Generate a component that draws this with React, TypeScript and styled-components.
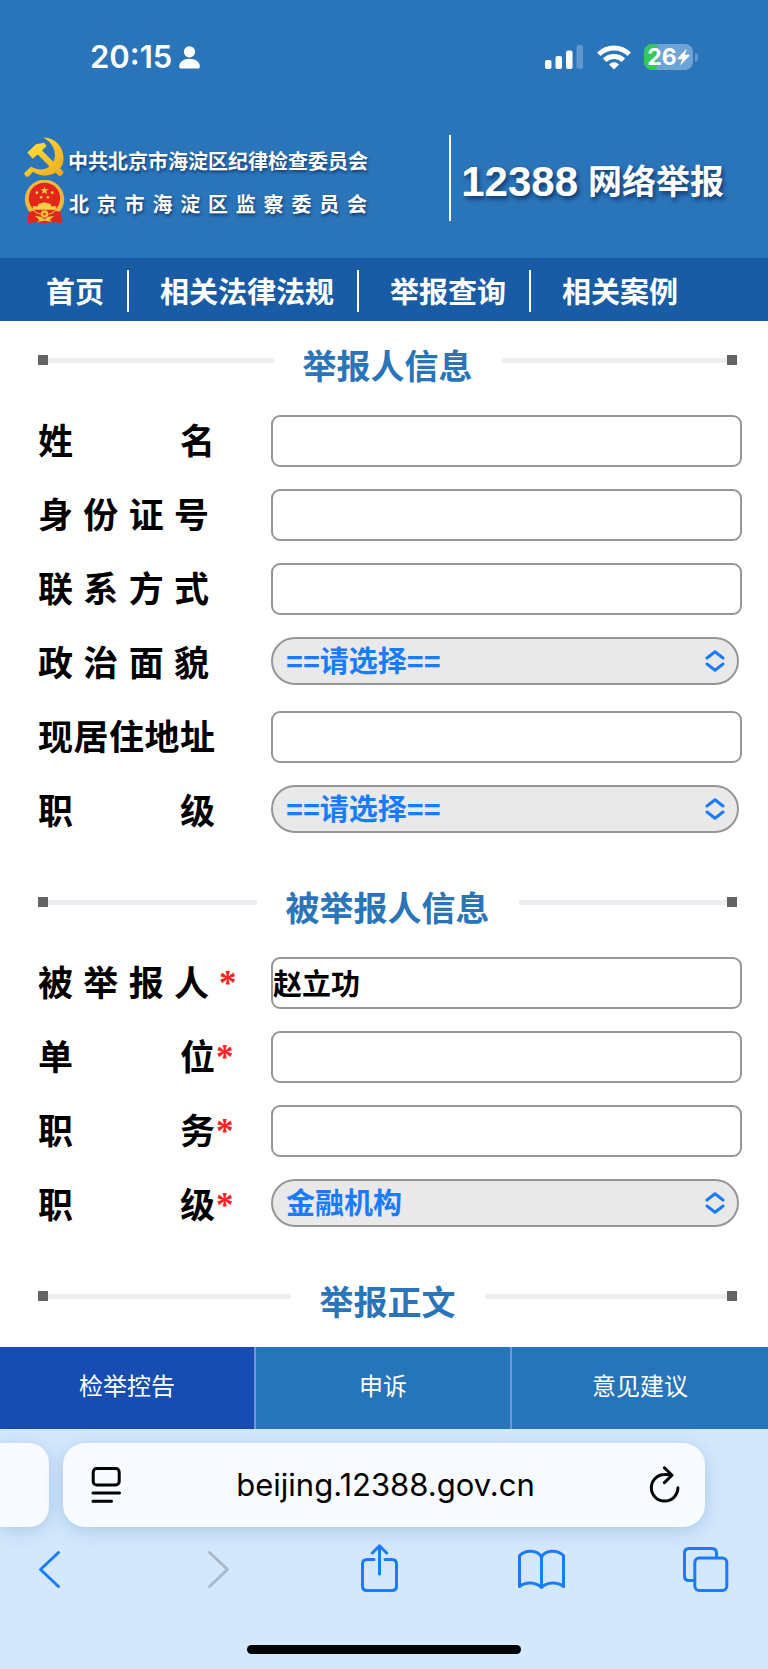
import React from "react";
import styled, { createGlobalStyle } from "styled-components";

const CJK = `"Noto Sans CJK SC"`;

const GlobalStyle = createGlobalStyle`
  *, *::before, *::after { box-sizing: border-box; }
  body {
    margin: 0;
    background: #fff;
    color: #000;
    font-family: "Liberation Sans", ${CJK}, sans-serif;
  }
  button, input, select { font: inherit; color: inherit; }
  a { color: inherit; text-decoration: none; }
`;

const Page = styled.div`
  width: 100%;
  overflow: hidden;
`;

/* ---------- header ---------- */

const Header = styled.header`
  background: #2a74b9;
  color: #fff;
`;

const StatusBar = styled.div`
  display: flex;
  align-items: center;
  justify-content: space-between;
  height: 114px;
  padding: 0 69px 0 90px;
  font-family: Inter, sans-serif;
`;

const StatusGroup = styled.div<{ $gap: number }>`
  display: flex;
  align-items: center;
  gap: ${(p) => p.$gap}px;
`;

const Clock = styled.time`
  font-size: 31px;
  font-weight: 600;
  line-height: 36px;
`;

const Battery = styled.div`
  position: relative;
  display: flex;
  align-items: center;
  justify-content: center;
  width: 49px;
  height: 26px;
  margin-right: 6px;
  border-radius: 8px;
  background: linear-gradient(90deg, #35c759 0 13px, #6ea3d6 13px);
  font-size: 23px;
  font-weight: 700;
  line-height: 26px;

  &::after {
    content: "";
    position: absolute;
    left: 51px;
    top: 9px;
    width: 3px;
    height: 9px;
    border-radius: 0 4px 4px 0;
    background: #5f98cf;
  }
`;

const Brand = styled.div`
  display: flex;
  align-items: flex-start;
  justify-content: space-between;
  padding: 21px 44px 35px 24px;
`;

const Lockup = styled.div`
  padding-top: 2px;
`;

const LockupRow = styled.div`
  display: flex;
  align-items: flex-start;
  gap: 4px;
  height: 43px;
`;

const LockupName = styled.div`
  width: 298px;
  font-family: ${CJK}, sans-serif;
  font-size: 20px;
  font-weight: 700;
  line-height: 48px;
  white-space: nowrap;
  text-align: justify;
  text-align-last: justify;
  text-shadow: 1px 2px 3px rgba(0, 20, 60, 0.6);
`;

const SiteTitle = styled.h1`
  display: flex;
  align-items: center;
  gap: 10px;
  height: 86px;
  margin: 0;
  padding: 8px 0 0 10px;
  border-left: 2px solid #fff;
  font-size: 34px;
  font-weight: 700;
  line-height: 48px;
  white-space: nowrap;
  text-shadow: 2px 3px 4px rgba(0, 20, 60, 0.6);
`;

const Hotline = styled.span`
  font-size: 42px;
`;

const Nav = styled.nav`
  display: flex;
  align-items: center;
  height: 63px;
  padding: 2px 0 0 15px;
  background: #195ca5;
  color: #fff;
`;

const NavLink = styled.a`
  padding: 4px 23px 0 31px;
  font-size: 29px;
  font-weight: 700;
  line-height: 38px;
  white-space: nowrap;

  & + & {
    border-left: 2px solid #fff;
  }
`;

/* ---------- form ---------- */

const Form = styled.form`
  padding: 21px 26px 19px 38px;
`;

const SectionHeading = styled.div`
  display: flex;
  align-items: flex-start;
  margin-right: 5px;
`;

const Rule = styled.span<{ $end?: boolean }>`
  display: flex;
  flex: 1;
  flex-direction: ${(p) => (p.$end ? "row-reverse" : "row")};
  align-items: center;
  margin-top: 13px;

  &::before {
    content: "";
    width: 10px;
    height: 10px;
    background: #636366;
  }
  &::after {
    content: "";
    flex: 1;
    height: 5px;
    background: #ededf2;
  }
`;

const SectionTitle = styled.h2`
  margin: 0;
  padding: 0 29px;
  color: #2a74b9;
  font-size: 34px;
  font-weight: 700;
  line-height: 50px;
`;

const Fields = styled.div`
  display: grid;
  gap: 22px;
  padding: 23px 0 47px;
`;

const Field = styled.div`
  display: grid;
  grid-template-columns: 233px 1fr;
  height: 52px;
`;

const Label = styled.label`
  display: flex;
  font-size: 35px;
  font-weight: 700;
  line-height: 54px;
`;

const LabelText = styled.span<{ $short: boolean }>`
  width: ${(p) => (p.$short ? 171 : 177)}px;
  margin-right: ${(p) => (p.$short ? 10 : 1)}px;
  white-space: nowrap;
  text-align: justify;
  text-align-last: justify;
`;

const Star = styled.span`
  color: #fb2222;
  font-family: "Liberation Serif", serif;
`;

const TextInput = styled.input`
  width: 100%;
  height: 52px;
  padding: 0 0 2px;
  border: 2px solid #969696;
  border-radius: 9px;
  background: #fff;
  font-size: 29px;
  font-weight: 700;
  outline: none;
`;

const SelectBox = styled.div`
  position: relative;
  height: 48px;
  margin-right: 3px;

  svg {
    position: absolute;
    right: 14px;
    top: 13px;
    pointer-events: none;
  }
`;

const Select = styled.select`
  width: 100%;
  height: 48px;
  padding: 2px 48px 0 13px;
  border: 2px solid #969696;
  border-radius: 24px;
  background: #e9e9e9;
  color: #1a7bff;
  font-size: 29px;
  font-weight: 700;
  appearance: none;
  outline: none;
`;

/* ---------- bottom tabs and browser bar ---------- */

const Tabs = styled.nav`
  display: grid;
  grid-template-columns: repeat(3, 1fr);
  height: 82px;
`;

const Tab = styled.button<{ $active?: boolean }>`
  padding: 0 0 8px;
  border: 0;
  border-right: 2px solid #6f96df;
  background: ${(p) => (p.$active ? "#174db3" : "#2674b9")};
  color: #fff;
  font-size: 24px;
  font-weight: 400;

  &:last-child {
    border-right: 0;
  }
`;

const Browser = styled.footer`
  background: #d3e8fd;
  padding: 14px 0 15px;
`;

const AddressRow = styled.div`
  display: flex;
  gap: 14px;
  padding-right: 63px;
`;

const NeighbourTab = styled.div`
  width: 49px;
  height: 84px;
  border-radius: 0 20px 20px 0;
  background: #f7faff;
  box-shadow: 0 4px 18px rgba(70, 120, 170, 0.28);
`;

const AddressBar = styled.div`
  display: flex;
  flex: 1;
  align-items: center;
  justify-content: space-between;
  height: 84px;
  padding: 0 24px 0 27px;
  border-radius: 22px;
  background: #f7faff;
  box-shadow: 0 4px 18px rgba(70, 120, 170, 0.28);
`;

const Address = styled.span`
  font-family: Inter, sans-serif;
  font-size: 31px;
  line-height: 40px;
`;

const IconButton = styled.button`
  display: flex;
  padding: 0;
  border: 0;
  background: none;
`;

const Toolbar = styled.div`
  display: flex;
  justify-content: space-between;
  padding: 17px 39px 51px 26px;
  color: #1a7bff;
`;

const HomeIndicator = styled.div`
  width: 274px;
  height: 9px;
  margin: 0 auto;
  border-radius: 5px;
  background: #000;
`;

/* ---------- drawings ---------- */

const line = {
  fill: "none",
  stroke: "currentColor",
  strokeWidth: 3,
  strokeLinecap: "round" as const,
  strokeLinejoin: "round" as const,
};

const PersonIcon = () => (
  <svg width="21" height="23" viewBox="0 0 21 23" fill="#fff">
    <circle cx="10.5" cy="5.8" r="5.6" />
    <path d="M0.2 20.5C0.2 16 4.6 12.8 10.5 12.8S20.8 16 20.8 20.5C20.8 22 20 22.6 18.8 22.6H2.2C1 22.6 0.2 22 0.2 20.5Z" />
  </svg>
);

const SignalIcon = () => (
  <svg width="39" height="24" viewBox="0 0 39 24" fill="#fff">
    <rect x="0" y="15" width="6.5" height="9" rx="2" />
    <rect x="10.5" y="11" width="6.5" height="13" rx="2" />
    <rect x="21" y="5.5" width="6.5" height="18.5" rx="2" />
    <rect x="31.5" y="0" width="6.5" height="24" rx="2" opacity="0.25" />
  </svg>
);

const WifiIcon = () => (
  <svg width="34" height="25" viewBox="0 0 34 25">
    <g fill="none" stroke="#fff" strokeWidth="5">
      <path d="M1.8 9.2A21.6 21.6 0 0 1 32.2 9.2" />
      <path d="M7.6 15.2A13.6 13.6 0 0 1 26.4 15.2" />
    </g>
    <path d="M17 24.6L12 19.4A7 7 0 0 1 22 19.4Z" fill="#fff" />
  </svg>
);

const BoltIcon = () => (
  <svg width="13" height="18" viewBox="0 0 13 18" fill="#fff">
    <path d="M9.8 0.6L0.4 10.4Q0.2 11.2 1 11.2H5.2L3.2 17.4L12.6 7.8Q12.8 6.8 12 6.8H7.8Z" />
  </svg>
);

const PartyEmblem = () => (
  <svg width="40" height="41" viewBox="24 20 120 122">
    <defs>
      <linearGradient id="gold" x1="0" y1="0" x2="1" y2="1">
        <stop offset="0" stopColor="#ffe23a" />
        <stop offset="1" stopColor="#eda81f" />
      </linearGradient>
    </defs>
    <g fill="url(#gold)">
      <path d="M82 21C122 22 147 56 142 92C137 123 106 139 76 134C65 132 57 128 51 124L38 138Q29 141 25 131Q24 125 31 122L45 108C58 117 80 121 97 110C128 90 122 42 82 21Z" />
      <path d="M34 66L60 41L84 37L92 46L78 60L142 123Q142 134 130 137L65 72L50 85Z" />
    </g>
  </svg>
);

const NationalEmblem = () => (
  <svg width="41" height="44" viewBox="24 150 122 132">
    <path d="M40 238L34 280L62 276L85 281L110 276L138 280L132 238Z" fill="#e3261c" />
    <circle cx="85" cy="208" r="59" fill="#e9b93c" />
    <circle cx="85" cy="205" r="47" fill="#e3261c" />
    <path d="M85 170L88 178H97L90 183L93 192L85 187L77 192L80 183L73 178H82Z" fill="#f6cf45" />
    <g fill="#f6cf45">
      <circle cx="62" cy="188" r="4" />
      <circle cx="108" cy="188" r="4" />
      <circle cx="75" cy="202" r="4" />
      <circle cx="95" cy="202" r="4" />
      <path d="M66 222L85 217L104 222V229H120V239H50V229H66Z" />
    </g>
    <path d="M38 246L52 242L60 250L85 258L110 250L118 242L132 246L136 268H34Z" fill="#e3261c" />
    <circle cx="85" cy="252" r="11" fill="#f2c53e" />
    <circle cx="85" cy="252" r="4" fill="#e3261c" />
    <path d="M56 258L74 260L85 268L96 260L114 258L100 270L108 276L85 272L62 276L70 270Z" fill="#f2c53e" />
  </svg>
);

const UpDownIcon = () => (
  <svg width="20" height="22" viewBox="0 0 20 22" {...line} stroke="#1a7bff">
    <path d="M2 8L10 1.8L18 8M2 14L10 20.2L18 14" />
  </svg>
);

const PageMenuIcon = () => (
  <svg width="32" height="38" viewBox="0 0 32 38" {...line}>
    <rect x="3.2" y="2.6" width="26" height="16.4" rx="3.6" />
    <path d="M3 27H29.5M3 35.2H21.5" />
  </svg>
);

const ReloadIcon = () => (
  <svg width="32" height="38" viewBox="0 0 32 38" {...line}>
    <path d="M22.5 9.2Q19 8.3 15.5 8.5A13.3 13.3 0 1 0 28.9 21.8" />
    <path d="M15.4 1.8L23 9.2L15.4 16.6" />
  </svg>
);

const BackIcon = () => (
  <svg width="48" height="50" viewBox="0 0 48 50" {...line}>
    <path d="M32.5 8.5L14.5 25.5L32.5 42.5" />
  </svg>
);

const ForwardIcon = () => (
  <svg width="48" height="50" viewBox="0 0 48 50" {...line} stroke="#a9b8c8">
    <path d="M19.5 8.5L37.5 25.5L19.5 42.5" />
  </svg>
);

const ShareIcon = () => (
  <svg width="48" height="50" viewBox="0 0 48 50" {...line}>
    <path d="M20 15.5H13Q8.5 15.5 8.5 20V42Q8.5 46.5 13 46.5H38Q42.5 46.5 42.5 42V20Q42.5 15.5 38 15.5H31" />
    <path d="M25.5 30V2.2M18.3 9L25.5 1.8L32.7 9" />
  </svg>
);

const BookIcon = () => (
  <svg width="48" height="50" viewBox="0 0 48 50" {...line}>
    <path d="M24.5 43.5V13C21 6 9 5 2.5 11.5V42.5C9 37.5 19 38 24.5 43.5C30 38 40 37.5 46.5 42.5V11.5C40 5 28 6 24.5 13" />
  </svg>
);

const TabsIcon = () => (
  <svg width="48" height="50" viewBox="0 0 48 50" {...line}>
    <path d="M12 36.5H8Q3.5 36.5 3.5 32V9Q3.5 4.5 8 4.5H31Q35.5 4.5 35.5 9V13" />
    <rect x="13.8" y="14" width="32" height="32.5" rx="4.5" />
  </svg>
);

/* ---------- content ---------- */

type FieldSpec = {
  id: string;
  label: string;
  required?: boolean;
  value?: string;
  options?: string[];
};

const reporter: FieldSpec[] = [
  { id: "name", label: "姓名" },
  { id: "idcard", label: "身份证号" },
  { id: "contact", label: "联系方式" },
  { id: "politics", label: "政治面貌", options: ["==请选择=="] },
  { id: "address", label: "现居住地址" },
  { id: "rank", label: "职级", options: ["==请选择=="] },
];

const reported: FieldSpec[] = [
  { id: "target", label: "被举报人", required: true, value: "赵立功" },
  { id: "unit", label: "单位", required: true },
  { id: "duty", label: "职务", required: true },
  { id: "targetRank", label: "职级", required: true, options: ["金融机构"] },
];

const Heading = ({ children }: { children: string }) => (
  <SectionHeading>
    <Rule />
    <SectionTitle>{children}</SectionTitle>
    <Rule $end />
  </SectionHeading>
);

const FieldList = ({ items }: { items: FieldSpec[] }) => (
  <Fields>
    {items.map((f) => (
      <Field key={f.id}>
        <Label htmlFor={f.id}>
          <LabelText $short={f.label.length === 4}>{f.label}</LabelText>
          {f.required && <Star>*</Star>}
        </Label>
        {f.options ? (
          <SelectBox>
            <Select id={f.id}>
              {f.options.map((o) => (
                <option key={o}>{o}</option>
              ))}
            </Select>
            <UpDownIcon />
          </SelectBox>
        ) : (
          <TextInput id={f.id} type="text" defaultValue={f.value} />
        )}
      </Field>
    ))}
  </Fields>
);

export default function App() {
  return (
    <Page>
      <GlobalStyle />
      <Header>
        <StatusBar>
          <StatusGroup $gap={7}>
            <Clock>20:15</Clock>
            <PersonIcon />
          </StatusGroup>
          <StatusGroup $gap={13}>
            <SignalIcon />
            <WifiIcon />
            <Battery>
              26
              <BoltIcon />
            </Battery>
          </StatusGroup>
        </StatusBar>
        <Brand>
          <Lockup>
            <LockupRow>
              <PartyEmblem />
              <LockupName>中共北京市海淀区纪律检查委员会</LockupName>
            </LockupRow>
            <LockupRow>
              <NationalEmblem />
              <LockupName>北京市海淀区监察委员会</LockupName>
            </LockupRow>
          </Lockup>
          <SiteTitle>
            <Hotline>12388</Hotline>
            <span>网络举报</span>
          </SiteTitle>
        </Brand>
      </Header>
      <Nav>
        <NavLink href="#home">首页</NavLink>
        <NavLink href="#laws">相关法律法规</NavLink>
        <NavLink href="#query">举报查询</NavLink>
        <NavLink href="#cases">相关案例</NavLink>
      </Nav>
      <Form>
        <Heading>举报人信息</Heading>
        <FieldList items={reporter} />
        <Heading>被举报人信息</Heading>
        <FieldList items={reported} />
        <Heading>举报正文</Heading>
      </Form>
      <Tabs>
        <Tab $active>检举控告</Tab>
        <Tab>申诉</Tab>
        <Tab>意见建议</Tab>
      </Tabs>
      <Browser>
        <AddressRow>
          <NeighbourTab />
          <AddressBar>
            <IconButton aria-label="页面菜单">
              <PageMenuIcon />
            </IconButton>
            <Address>beijing.12388.gov.cn</Address>
            <IconButton aria-label="重新载入">
              <ReloadIcon />
            </IconButton>
          </AddressBar>
        </AddressRow>
        <Toolbar>
          <IconButton aria-label="后退">
            <BackIcon />
          </IconButton>
          <IconButton aria-label="前进">
            <ForwardIcon />
          </IconButton>
          <IconButton aria-label="共享">
            <ShareIcon />
          </IconButton>
          <IconButton aria-label="书签">
            <BookIcon />
          </IconButton>
          <IconButton aria-label="标签页">
            <TabsIcon />
          </IconButton>
        </Toolbar>
        <HomeIndicator />
      </Browser>
    </Page>
  );
}
